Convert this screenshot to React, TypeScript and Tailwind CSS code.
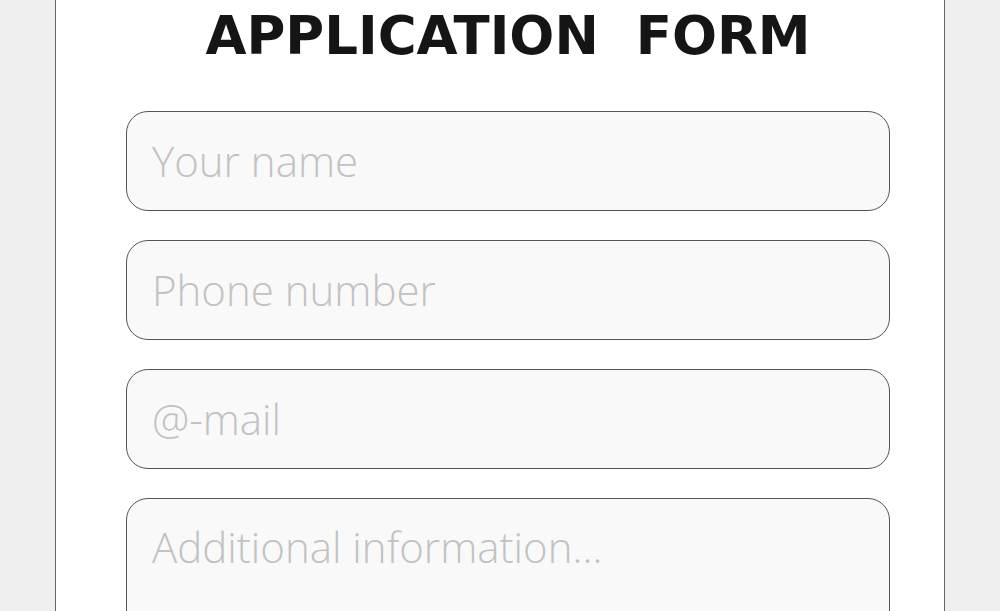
import React from "react";

const fieldClass =
  "w-full h-[100px] rounded-[22px] border border-[#555] bg-[#f9f9f9] px-[25px] pb-[2px] text-[42px] font-light text-[#333] placeholder:text-[#c2c2c2] outline-none";

const App: React.FC = () => {
  return (
    <div className="h-[611px] overflow-hidden bg-[#efefef] flex justify-center">
      <div className="w-[890px] h-full bg-white border-x border-[#666] flex flex-col items-start">
        <h1
          className="self-center ml-[16px] pt-[4px] text-[53px] font-bold text-[#151515] leading-[64px] whitespace-pre"
          style={{ fontFamily: '"DejaVu Sans", sans-serif' }}
        >
          APPLICATION  FORM
        </h1>
        <form
          className="mt-[43px] ml-[70px] w-[764px] flex flex-col gap-[29px]"
          style={{ fontFamily: '"Open Sans", sans-serif' }}
        >
          <input type="text" placeholder="Your name" className={fieldClass} />
          <input type="tel" placeholder="Phone number" className={fieldClass} />
          <input type="email" placeholder="@-mail" className={fieldClass} />
          <textarea
            placeholder="Additional information..."
            className="w-full h-[200px] resize-none rounded-[22px] border border-[#555] bg-[#f9f9f9] px-[25px] pt-[16px] text-[42px] font-light text-[#333] placeholder:text-[#c2c2c2] outline-none"
          />
        </form>
      </div>
    </div>
  );
};

export default App;
